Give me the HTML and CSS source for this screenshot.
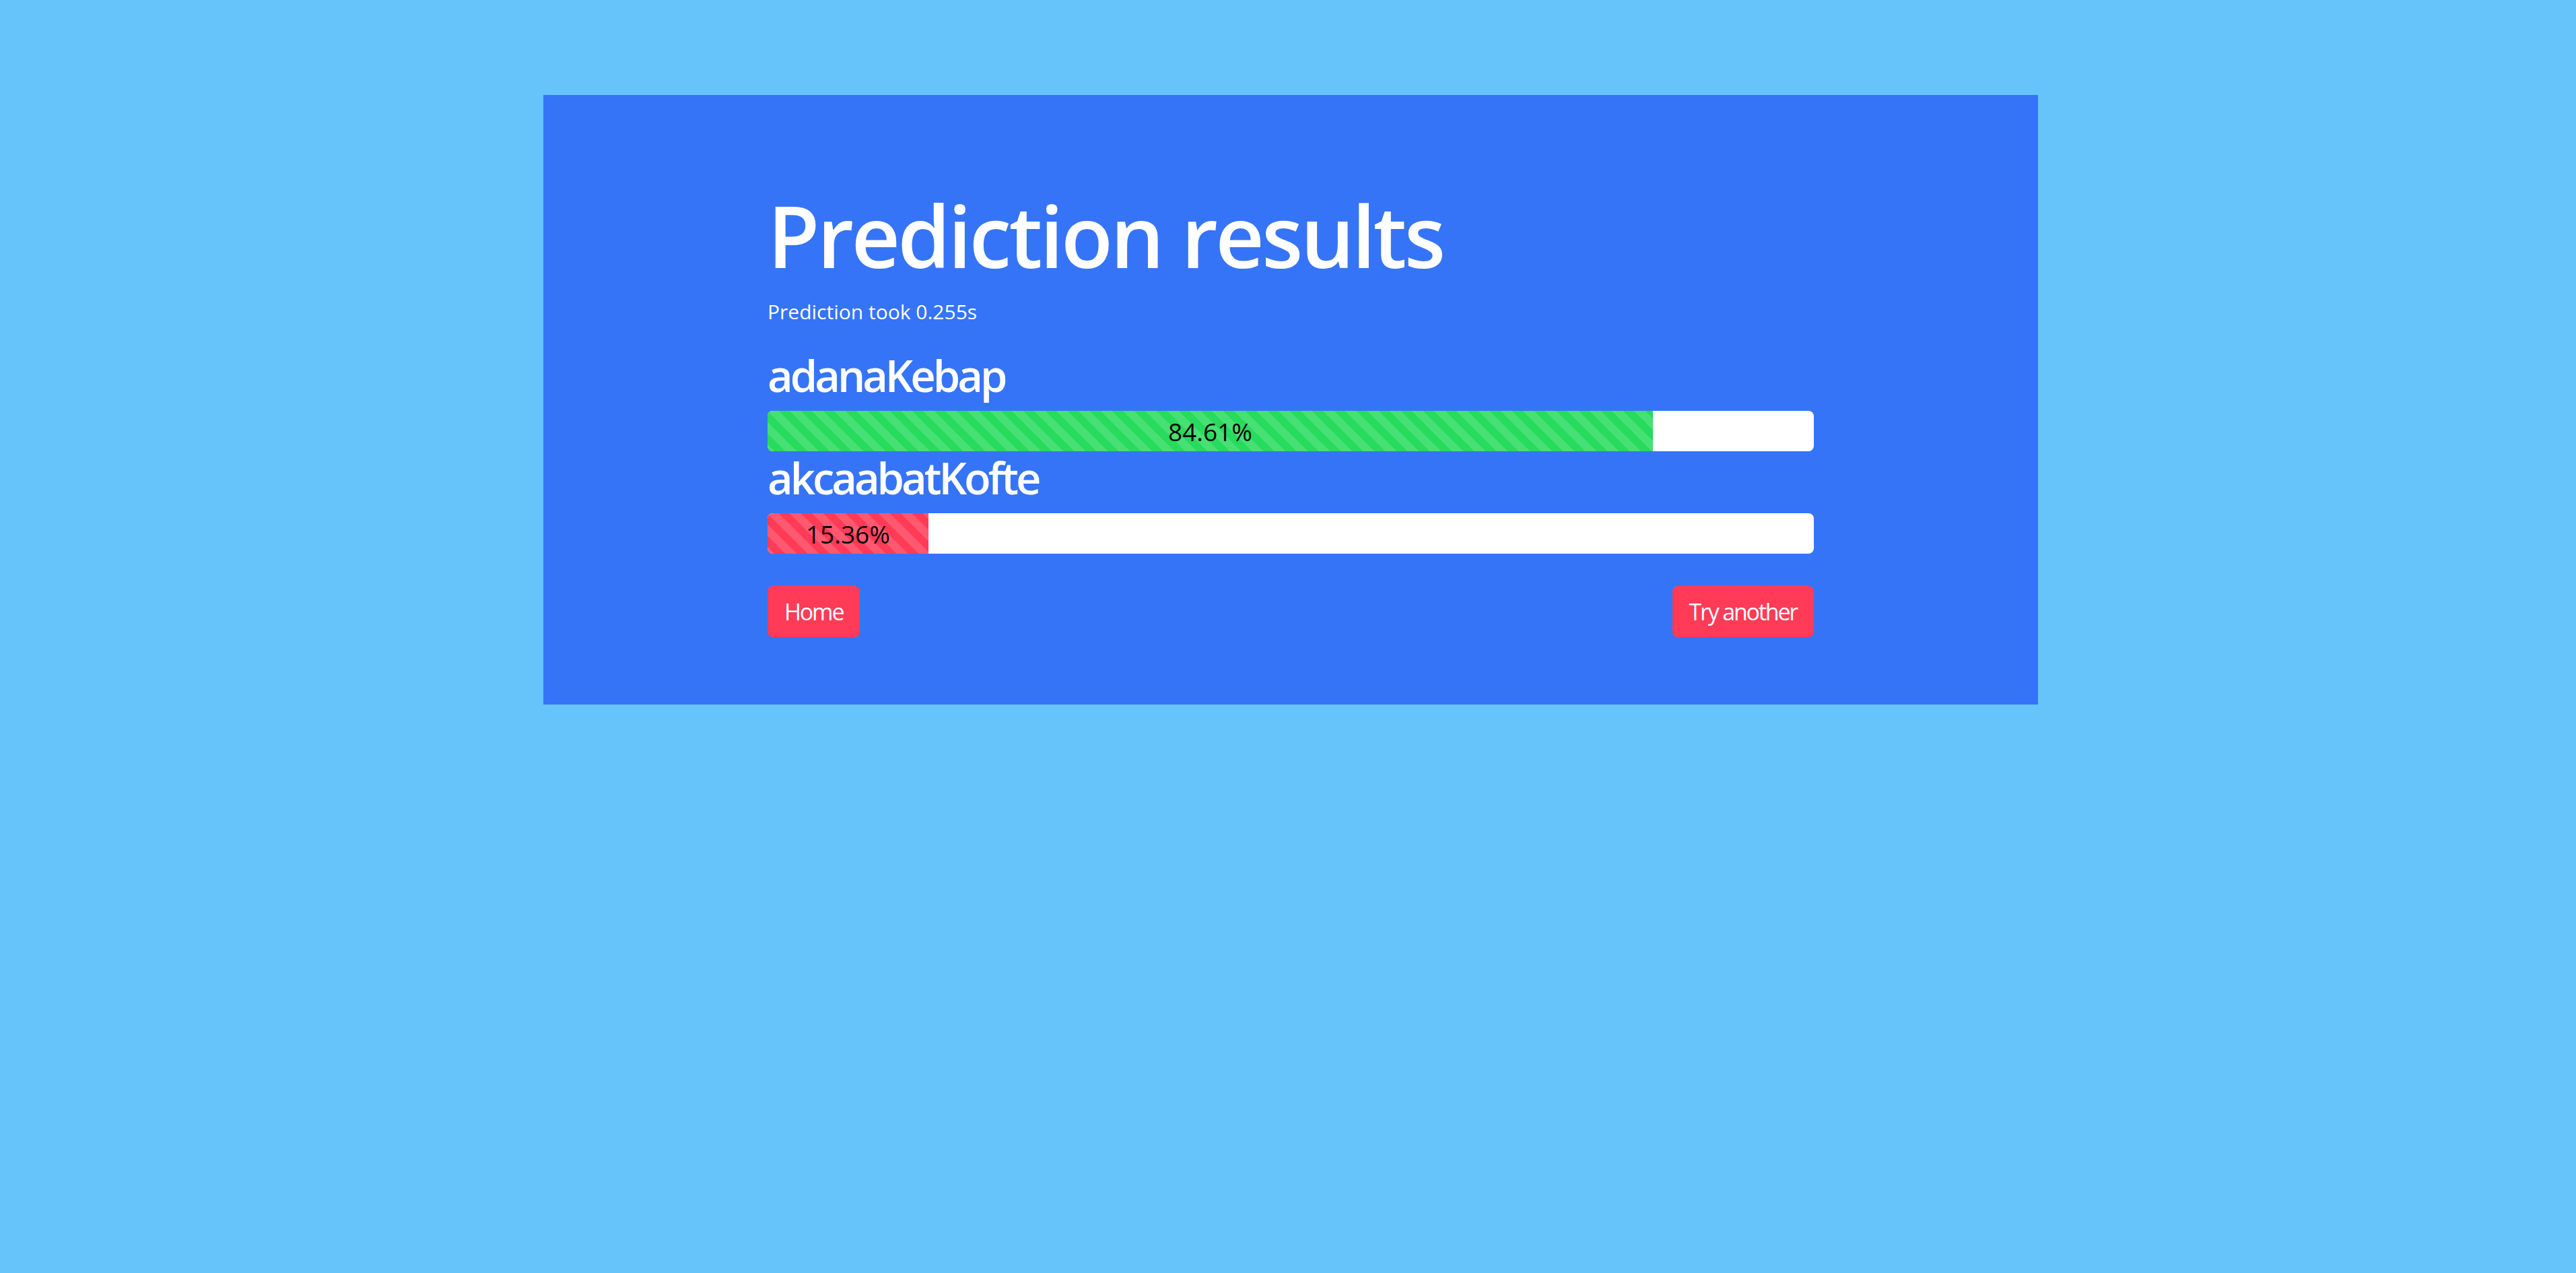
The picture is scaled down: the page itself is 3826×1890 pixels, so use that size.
FILE: index.html
```html
<!DOCTYPE html>
<html lang="en">
<head>
<meta charset="utf-8">
<title>Prediction results</title>
<link rel="stylesheet" href="styles.css">
</head>
<body>
<main class="panel">
  <div class="content">
    <h1 class="title">Prediction results</h1>
    <p class="took">Prediction took 0.255s</p>
    <section class="results">
      <h3 class="label">adanaKebap</h3>
      <div class="progress">
        <div class="bar bar-green" style="width: 84.61%">84.61%</div>
      </div>
      <h3 class="label">akcaabatKofte</h3>
      <div class="progress">
        <div class="bar bar-red" style="width: 15.36%">15.36%</div>
      </div>
    </section>
    <div class="actions">
      <a class="btn" href="#">Home</a>
      <a class="btn" href="#">Try another</a>
    </div>
  </div>
</main>
</body>
</html>
```

FILE: styles.css
```css
html, body {
  margin: 0;
  padding: 0;
}

body {
  background: #66c4fb;
  font-family: "Open Sans", "Noto Sans", sans-serif;
  color: #fff;
  min-height: 1890px;
}

.panel {
  margin: 141px 0 0 807px;
  width: 2220px;
  background: #3674f7;
  padding: 133px 0 100px;
  box-sizing: border-box;
}

.content {
  width: 1554px;
  margin: 0 auto;
}

.title {
  margin: 0;
  font-size: 126px;
  line-height: 150px;
  font-weight: 600;
  letter-spacing: -3.7px;
}

.took {
  margin: 17px 0 33px;
  font-size: 30px;
  line-height: 44px;
}

.label {
  margin: 0 0 14px;
  font-size: 65px;
  line-height: 78px;
  font-weight: 600;
  letter-spacing: -4px;
}

.progress {
  height: 60px;
  background: #fff;
  border-radius: 8px;
  overflow: hidden;
  display: flex;
}

.bar {
  display: flex;
  align-items: center;
  justify-content: center;
  color: #000;
  font-size: 37px;
  white-space: nowrap;
  background-image: linear-gradient(45deg,
    rgba(255,255,255,.15) 25%, transparent 25%,
    transparent 50%, rgba(255,255,255,.15) 50%,
    rgba(255,255,255,.15) 75%, transparent 75%, transparent);
  background-size: 33px 33px;
}

.bar-green {
  background-color: #27db5c;
}

.bar-red {
  background-color: #ff3b58;
}

.actions {
  display: flex;
  justify-content: space-between;
  margin-top: 48px;
}

.btn {
  display: inline-flex;
  align-items: center;
  height: 76px;
  padding: 0 25px;
  box-sizing: border-box;
  background: #ff3b58;
  color: #fff;
  text-decoration: none;
  font-size: 34px;
  letter-spacing: -2.2px;
  border-radius: 8px;
}
```
